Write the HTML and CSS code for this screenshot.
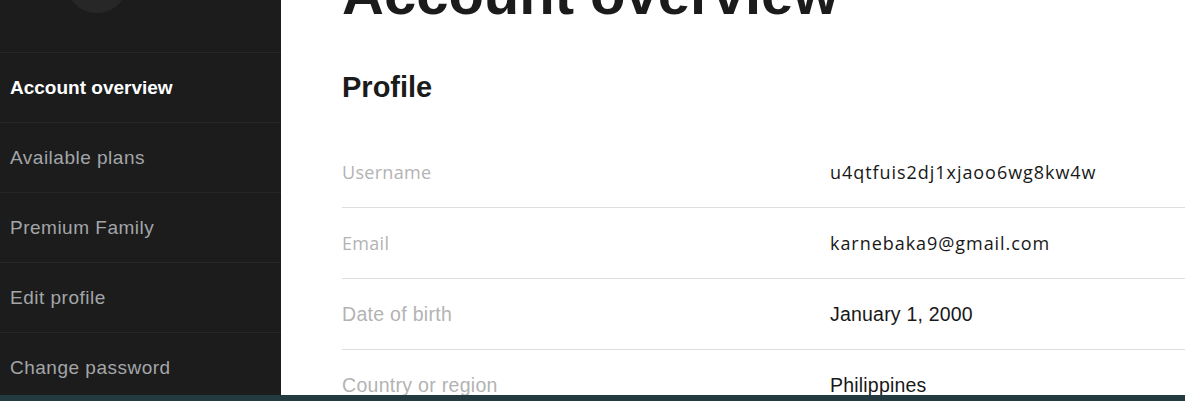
FILE: index.html
```html
<!DOCTYPE html>
<html lang="en">
<head>
<meta charset="utf-8">
<title>Account overview</title>
<link rel="stylesheet" href="styles.css">
</head>
<body>
<div class="app">
  <aside class="sidebar">
    <div class="avatar-wrap"><div class="avatar"></div></div>
    <nav class="nav">
      <a class="nav-item active">Account overview</a>
      <a class="nav-item">Available plans</a>
      <a class="nav-item">Premium Family</a>
      <a class="nav-item">Edit profile</a>
      <a class="nav-item">Change password</a>
    </nav>
  </aside>
  <main class="main">
    <h1 class="title">Account overview</h1>
    <h2 class="section">Profile</h2>
    <div class="table">
      <div class="row"><span class="label">Username</span><span class="value">u4qtfuis2dj1xjaoo6wg8kw4w</span></div>
      <div class="row"><span class="label">Email</span><span class="value">karnebaka9@gmail.com</span></div>
      <div class="row alt"><span class="label">Date of birth</span><span class="value">January 1, 2000</span></div>
      <div class="row alt"><span class="label">Country or region</span><span class="value">Philippines</span></div>
    </div>
  </main>
</div>
<div class="bottombar"></div>
</body>
</html>
```
FILE: styles.css
```css
* { box-sizing: border-box; }
html, body { margin: 0; padding: 0; }
body {
  width: 1185px;
  height: 401px;
  overflow: hidden;
  background: #ffffff;
  font-family: "Liberation Sans", Arial, sans-serif;
}
.app {
  display: flex;
  height: 395px;
  overflow: hidden;
}
.sidebar {
  width: 281px;
  flex: none;
  background: #1c1c1c;
  display: flex;
  flex-direction: column;
  overflow: hidden;
}
.avatar-wrap {
  height: 52px;
  flex: none;
  display: flex;
  justify-content: center;
  padding-right: 88px;
  overflow: hidden;
}
.avatar {
  width: 62px;
  height: 62px;
  border-radius: 50%;
  background: #272727;
  margin-top: -49px;
  flex: none;
}
.nav { display: flex; flex-direction: column; flex: none; }
.nav-item {
  height: 70px;
  flex: none;
  border-top: 1px solid #272727;
  display: flex;
  align-items: center;
  padding-left: 10px;
  font-size: 19px;
  color: #a3a6a9;
  letter-spacing: 0.5px;
}
.nav-item.active {
  color: #ffffff;
  font-weight: 600;
  letter-spacing: 0;
}
.main {
  flex: 1;
  padding-left: 61px;
  overflow: hidden;
  color: #181818;
}
.title {
  margin: -35px 0 0;
  font-size: 58px;
  line-height: 57px;
  font-weight: 700;
  color: #1b1b1b;
  white-space: nowrap;
  letter-spacing: 0;
}
.section {
  margin: 48px 0 0;
  font-size: 29px;
  line-height: 34px;
  font-weight: 700;
  color: #1b1b1b;
}
.table {
  margin-top: 33px;
  width: 976px;
}
.row {
  display: grid;
  grid-template-columns: 488px 1fr;
  align-items: center;
  height: 71px;
  border-bottom: 1px solid #dedede;
  font-family: "Open Sans", "Liberation Sans", sans-serif;
  font-size: 18px;
  letter-spacing: 0.3px;
}
.label { color: #b3b3b3; }
.value { color: #181818; letter-spacing: 0.95px; }
.row.alt {
  font-family: "Liberation Sans", Arial, sans-serif;
  font-size: 19.5px;
  letter-spacing: 0.3px;
}
.row.alt .value { letter-spacing: 0.2px; }
.bottombar {
  height: 6px;
  background: #243a41;
}
```
